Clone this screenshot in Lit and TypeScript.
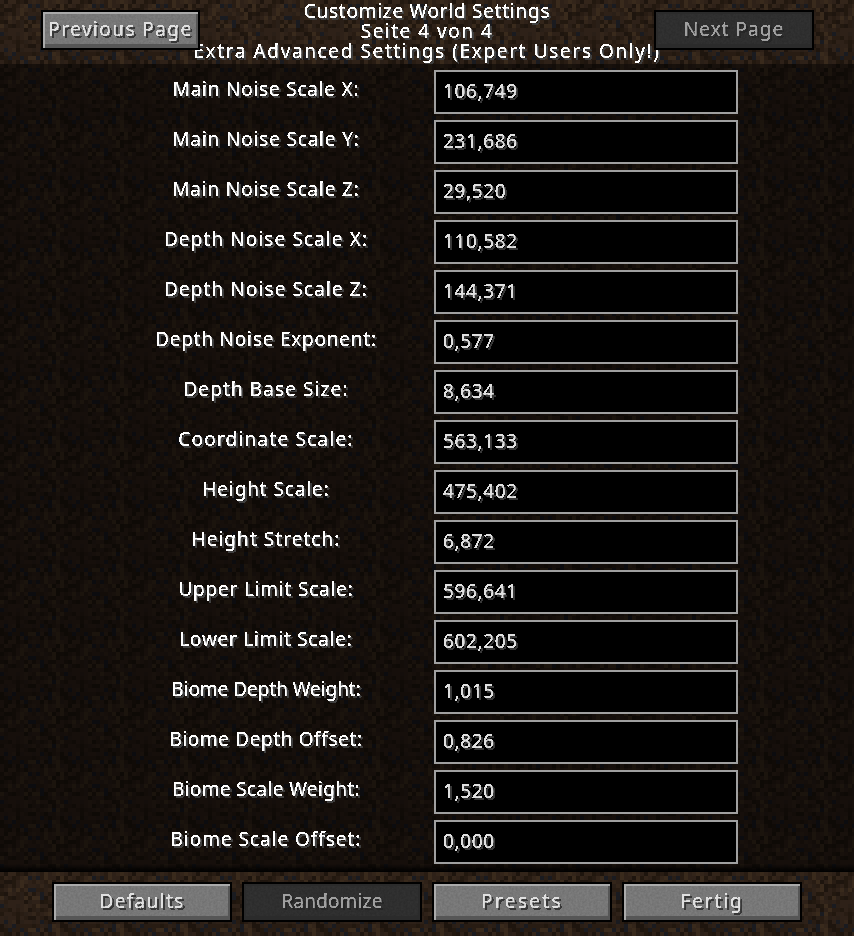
import { LitElement, html, css, svg } from "lit";
import { customElement } from "lit/decorators.js";

const BASE = 0.35;
// label, value, letter-spacing correction that brings the label to its reference width
const ROWS: [string, string, number][] = [
  ["Main Noise Scale X:", "106,749", 0.42],
  ["Main Noise Scale Y:", "231,686", 0.47],
  ["Main Noise Scale Z:", "29,520", 0.47],
  ["Depth Noise Scale X:", "110,582", 0.74],
  ["Depth Noise Scale Z:", "144,371", 0.74],
  ["Depth Noise Exponent:", "0,577", 0.43],
  ["Depth Base Size:", "8,634", 0.75],
  ["Coordinate Scale:", "563,133", 0.85],
  ["Height Scale:", "475,402", 0.54],
  ["Height Stretch:", "6,872", 0.7],
  ["Upper Limit Scale:", "596,641", 0.44],
  ["Lower Limit Scale:", "602,205", 0.4],
  ["Biome Depth Weight:", "1,015", -0.39],
  ["Biome Depth Offset:", "0,826", 0.26],
  ["Biome Scale Weight:", "1,520", 0],
  ["Biome Scale Offset:", "0,000", 0.61],
];
const TITLE: [string, number][] = [
  ["Customize World Settings", 0.38],
  ["Seite 4 von 4", 1.15],
  ["Extra Advanced Settings (Expert Users Only!)", 1.27],
];

const PALETTE = ["#2e2118", "#281c13", "#33251a", "#22180f", "#392a1c", "#2a1f17", "#2e2118", "#281c13", "#1e150e", "#1a1b20"];
let seed = 1337;
const rnd = () => {
  seed = (seed * 16807) % 2147483647;
  return seed / 2147483647;
};
const pick = () => {
  const i = Math.floor(rnd() * PALETTE.length);
  return PALETTE[i === 9 && rnd() > 0.5 ? 0 : i];
};
const TILE = Array.from({ length: 256 }, (_, i) =>
  svg`<rect x=${(i % 16) * 4} y=${Math.floor(i / 16) * 4} width="4" height="4" fill=${pick()}></rect>`
);
const spacing = (d: number) => `letter-spacing:${(BASE + d).toFixed(2)}px`;

@customElement("app-root")
export class AppRoot extends LitElement {
  static styles = css`
    :host {
      display: block;
      width: 854px;
      height: 936px;
      overflow: hidden;
      background: #000;
      font-family: "Noto Sans", sans-serif;
      font-size: 19px;
      letter-spacing: 0.35px;
      line-height: 20px;
    }
    .defs { position: absolute; width: 0; height: 0; }
    .page { display: flex; flex-direction: column; height: 936px; }
    .bg { position: absolute; inset: 0; width: 100%; height: 100%; }
    .band { position: relative; flex: none; }
    .header { height: 64px; display: flex; justify-content: space-between; padding: 10px 40px 0 41px; box-sizing: border-box; }
    .title {
      position: absolute; left: 0; right: 0; top: 1px;
      display: flex; flex-direction: column; align-items: center;
      color: #fff; text-shadow: 2px 2px 0 #3f3f3f; white-space: nowrap;
    }
    .list {
      height: 808px; box-sizing: border-box; padding-top: 6px;
      display: flex; flex-direction: column; gap: 6px; align-items: center;
    }
    .list .bg { opacity: 0.48; }
    .list::before, .list::after { content: ""; position: absolute; left: 0; right: 0; height: 8px; }
    .list::before { top: 0; background: linear-gradient(#000, transparent); }
    .list::after { bottom: 0; background: linear-gradient(transparent, #000); }
    .row { position: relative; display: grid; grid-template-columns: 300px 304px; column-gap: 18px; height: 44px; }
    .label {
      text-align: center; color: #fff; text-shadow: 2px 2px 0 #3f3f3f; white-space: nowrap;
      padding-top: 9px;
    }
    .input {
      box-sizing: border-box; height: 44px; background: #000; border: 2px solid #a0a0a0;
      color: #e0e0e0; text-shadow: 2px 2px 0 #383838; padding: 9px 0 0 7px; letter-spacing: 0.65px;
    }
    .footer { height: 64px; display: flex; gap: 10px; justify-content: center; padding-top: 10px; box-sizing: border-box; }
    .btn {
      position: relative; box-sizing: border-box; height: 40px; width: 180px; padding-bottom: 2px;
      border: 2px solid #000; background: #707070;
      box-shadow: inset 2px 2px 0 #aaa, inset -2px -4px 0 #565656;
      display: flex; align-items: center; justify-content: center;
      color: #e0e0e0; text-shadow: 2px 2px 0 #383838; white-space: nowrap;
    }
    .btn.top { width: 159px; }
    .btn.top.next { width: 160px; }
    .btn.off { background: #2b2b2b; box-shadow: none; color: #a0a0a0; text-shadow: 2px 2px 0 #262626; }
    .noise { position: absolute; left: 2px; top: 2px; width: calc(100% - 4px); height: calc(100% - 6px); opacity: 0.2; }
    .btn.off .noise { opacity: 0.05; }
    .btn span { position: relative; }
    .crisp { filter: url(#crisp); }
  `;

  private dirt(id: string) {
    return html`<svg class="bg" aria-hidden="true">
      <defs>
        <pattern id=${id} width="64" height="64" patternUnits="userSpaceOnUse">${TILE}</pattern>
      </defs>
      <rect width="100%" height="100%" fill="url(#${id})"></rect>
    </svg>`;
  }

  private button(label: string, d: number, cls = "") {
    return html`<div class="btn ${cls}">
      <svg class="noise" aria-hidden="true"><rect width="100%" height="100%" filter="url(#grain)"></rect></svg>
      <span class="crisp" style=${spacing(d)}>${label}</span>
    </div>`;
  }

  render() {
    return html`
      <svg class="defs" aria-hidden="true">
        <defs>
          <filter id="crisp" x="-5%" y="-20%" width="110%" height="140%" color-interpolation-filters="sRGB">
            <feComponentTransfer><feFuncA type="discrete" tableValues="0 1 1"></feFuncA></feComponentTransfer>
          </filter>
          <filter id="grain" x="0" y="0" width="100%" height="100%">
            <feTurbulence type="fractalNoise" baseFrequency="0.45" numOctaves="2" seed="4"></feTurbulence>
            <feColorMatrix values="0 0 0 0 0.5  0 0 0 0 0.5  0 0 0 0 0.5  1.6 0 0 0 -0.3"></feColorMatrix>
          </filter>
        </defs>
      </svg>
      <div class="page">
        <div class="band header">
          ${this.dirt("d1")}
          <div class="title crisp">
            ${TITLE.map(([t, d]) => html`<div style=${spacing(d)}>${t}</div>`)}
          </div>
          ${this.button("Previous Page", 1.08, "top")}
          ${this.button("Next Page", 0.67, "top next off")}
        </div>
        <div class="band list">
          ${this.dirt("d2")}
          ${ROWS.map(
            ([l, v, d]) => html`<div class="row">
              <div class="label crisp" style=${spacing(d)}>${l}</div>
              <div class="input"><span class="crisp">${v}</span></div>
            </div>`
          )}
        </div>
        <div class="band footer">
          ${this.dirt("d3")}
          ${this.button("Defaults", 1)}
          ${this.button("Randomize", -0.2, "off")}
          ${this.button("Presets", 2)}
          ${this.button("Fertig", 1.5)}
        </div>
      </div>
    `;
  }
}
